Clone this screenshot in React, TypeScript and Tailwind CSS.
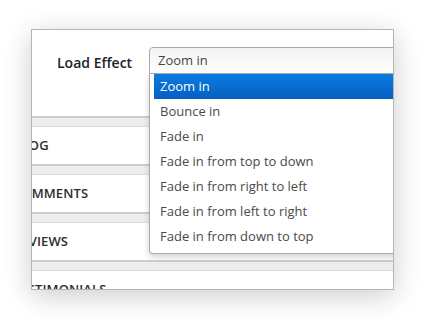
import React from "react";

const options = [
  "Zoom in",
  "Bounce in",
  "Fade in",
  "Fade in from top to down",
  "Fade in from right to left",
  "Fade in from left to right",
  "Fade in from down to top",
];

const rows = ["BLOG", "COMMENTS", "REVIEWS", "TESTIMONIALS"];

export default function App() {
  return (
    <div
      className="w-[421px] h-[323px] bg-white pt-[29px] pl-[31px]"
      style={{ fontFamily: '"Open Sans", "Liberation Sans", sans-serif' }}
    >
      <div className="relative w-[363px] h-[261px] border border-[#b5b5b5] bg-white overflow-hidden shadow-[0_6px_26px_rgba(0,0,0,0.2)]">
        <div className="h-[86px] flex items-start pt-[23px] pl-[25px]">
          <span className="text-[14px] font-semibold text-[#222] leading-[20px]">Load Effect</span>
        </div>
        {rows.map((r) => (
          <div key={r}>
            <div className="h-[10px] bg-[#ededed] border-t-2 border-[#cdcdcd] box-border" />
            <div className="h-[1px] bg-[#dcdcdc]" />
            <div className="h-[37px] flex items-center ml-[-19px]">
              <span className="text-[13px] font-semibold text-[#2d2d2d] tracking-[0.1px]">{r}</span>
            </div>
          </div>
        ))}

        <div className="absolute left-[117px] top-[17px] w-[300px]">
          <div className="h-[27px] border border-[#a9a9a9] rounded-tl-[4px] bg-gradient-to-b from-[#f3f3f3] to-white flex items-center pl-[8px]">
            <span className="text-[13px] text-[#444]">Zoom in</span>
          </div>
          <div className="border-l border-b border-[#a9a9a9] rounded-bl-[4px] bg-white pl-[4px] pb-[4px] shadow-[0_3px_6px_rgba(0,0,0,0.18)]">
            {options.map((o, i) => (
              <div
                key={o}
                className={
                  i === 0
                    ? "h-[25px] flex items-center pl-[6px] bg-gradient-to-b from-[#0b7ce2] to-[#0560c0] text-white"
                    : "h-[25px] flex items-center pl-[6px] text-[#4a4a4a]"
                }
              >
                <span className="text-[13px]">{o}</span>
              </div>
            ))}
          </div>
        </div>
      </div>
    </div>
  );
}
